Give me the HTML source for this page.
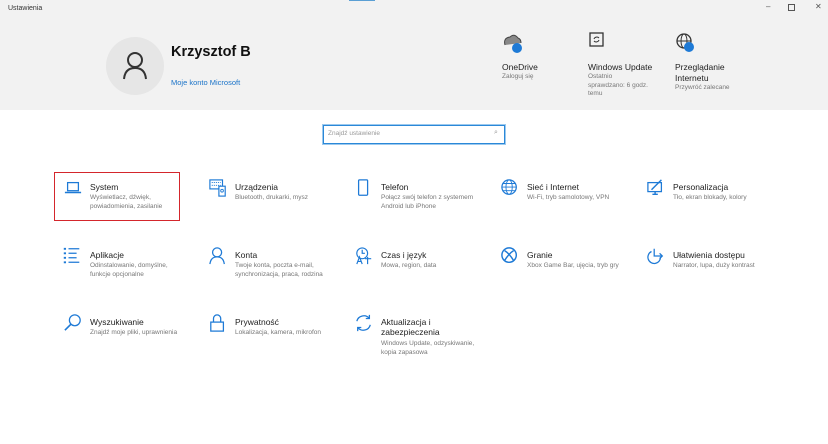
<!DOCTYPE html><html><head><meta charset="utf-8"><style>
body{margin:0;width:828px;height:444px;background:#fff;font-family:"Liberation Sans",sans-serif;position:relative;overflow:hidden}
.hdr{position:absolute;left:0;top:0;width:828px;height:110px;background:#f2f2f2}
.a{position:absolute}
.t{font-size:8.5px;color:#222;white-space:nowrap}
.s{font-size:6.5px;color:#777;line-height:8.5px}
.item .t{position:absolute;top:0}
.item .s{position:absolute;top:12px;width:120px}
.ic{position:absolute;left:-26px;top:-3px;width:18px;height:18px}
svg{overflow:visible}
</style></head><body>
<div class="hdr"></div>
<div class="a" style="left:8px;top:5px;font-size:7px;color:#333">Ustawienia</div>
<div class="a" style="left:349px;top:0;width:26px;height:1px;background:#5a9fd4"></div>
<div class="a" style="left:766px;top:2px;font-size:8px;color:#555">–</div>
<div class="a" style="left:788px;top:4px;width:5px;height:5px;border:1px solid #555"></div>
<div class="a" style="left:815px;top:2px;font-size:8px;color:#555">✕</div>
<div class="a" style="left:106px;top:37px;width:58px;height:58px;border-radius:50%;background:#e6e6e6"></div>
<svg class="a" style="left:122px;top:51px" width="26" height="30"><circle cx="13" cy="9" r="7" fill="none" stroke="#333" stroke-width="2"/><path d="M2 28 Q3 17 13 17 Q23 17 24 28" fill="none" stroke="#333" stroke-width="2"/></svg>
<div class="a" style="left:171px;top:44px;font-size:14.5px;font-weight:bold;color:#111">Krzysztof B</div>
<div class="a" style="left:171px;top:78px;font-size:7.5px;color:#1a73c8">Moje konto Microsoft</div>
<svg class="a" style="left:503px;top:33px" width="22" height="20"><path d="M2 12 Q0 5 7 4 Q11 0 15 5 Q18 6 18 10" fill="#888" stroke="#444" stroke-width="1"/><circle cx="14" cy="15" r="5" fill="#1e7ad6"/></svg>
<div class="a t" style="left:502px;top:62px">OneDrive</div>
<div class="a s" style="left:502px;top:73px">Zaloguj się</div>
<svg class="a" style="left:589px;top:32px" width="16" height="16"><rect x="1" y="1" width="13" height="13" fill="none" stroke="#333" stroke-width="1.3"/><path d="M5 7 A3 3 0 0 1 10 6 M10 8 A3 3 0 0 1 5 9" fill="none" stroke="#333"/></svg>
<div class="a t" style="left:588px;top:62px">Windows Update</div>
<div class="a s" style="left:588px;top:73px;width:60px">Ostatnio sprawdzano: 6 godz. temu</div>
<svg class="a" style="left:675px;top:32px" width="22" height="22"><circle cx="9" cy="9" r="7" fill="none" stroke="#333" stroke-width="1.3"/><ellipse cx="9" cy="9" rx="3" ry="7" fill="none" stroke="#333"/><path d="M2 9H16" stroke="#333"/><circle cx="14" cy="15" r="5" fill="#1e7ad6"/></svg>
<div class="a t" style="left:675px;top:62px;line-height:11px">Przeglądanie<br>Internetu</div>
<div class="a s" style="left:675px;top:84px">Przywróć zalecane</div>
<div class="a" style="left:323px;top:125px;width:180px;height:17px;border:1px solid #2b88d8;box-shadow:0 0 0 1px #9cc9ee"></div>
<div class="a" style="left:328px;top:130px;font-size:6.5px;color:#999">Znajdź ustawienie</div>
<div class="a" style="left:494px;top:129px;font-size:7px;color:#999">⌕</div>
<div class="a" style="left:54px;top:172px;width:124px;height:47px;border:1.5px solid #d4262c"></div>

<div class="a item" style="left:90px;top:182px"><svg class="ic" viewBox="0 0 20 20"><rect x="4" y="4" width="12" height="9" fill="none" stroke="#1e7ad6" stroke-width="1.4"/><path d="M1 15H19" stroke="#1e7ad6" stroke-width="1.6"/></svg><div class="t">System</div><div class="s" style="width:80px">Wyświetlacz, dźwięk, powiadomienia, zasilanie</div></div>
<div class="a item" style="left:235px;top:182px"><svg class="ic" viewBox="0 0 20 20"><rect x="1" y="1" width="14" height="10" fill="none" stroke="#1e7ad6" stroke-width="1.3"/><path d="M3 4h10M3 7h10" stroke="#1e7ad6" stroke-dasharray="1.3 1"/><rect x="11" y="8" width="7" height="11" fill="#fff" stroke="#1e7ad6" stroke-width="1.3"/><circle cx="14.5" cy="13" r="1.5" fill="none" stroke="#1e7ad6"/></svg><div class="t">Urządzenia</div><div class="s">Bluetooth, drukarki, mysz</div></div>
<div class="a item" style="left:381px;top:182px"><svg class="ic" viewBox="0 0 20 20"><rect x="4" y="1" width="10" height="17" rx="1" fill="none" stroke="#1e7ad6" stroke-width="1.4"/></svg><div class="t">Telefon</div><div class="s" style="width:108px">Połącz swój telefon z systemem Android lub iPhone</div></div>
<div class="a item" style="left:527px;top:182px"><svg class="ic" viewBox="0 0 20 20"><circle cx="9" cy="9" r="8" fill="none" stroke="#1e7ad6" stroke-width="1.4"/><ellipse cx="9" cy="9" rx="3.5" ry="8" fill="none" stroke="#1e7ad6"/><path d="M1 9H17M2 5H16M2 13H16" stroke="#1e7ad6"/></svg><div class="t">Sieć i Internet</div><div class="s">Wi-Fi, tryb samolotowy, VPN</div></div>
<div class="a item" style="left:673px;top:182px"><svg class="ic" viewBox="0 0 20 20"><rect x="1" y="4" width="15" height="10" fill="none" stroke="#1e7ad6" stroke-width="1.4"/><path d="M6 17H12M9 14V17M5 12L16 1" stroke="#1e7ad6" stroke-width="1.6"/></svg><div class="t">Personalizacja</div><div class="s">Tło, ekran blokady, kolory</div></div>

<div class="a item" style="left:90px;top:250px"><svg class="ic" viewBox="0 0 20 20"><path d="M1 1v2M1 6v2M1 11v2M1 16v2" stroke="#1e7ad6" stroke-width="2.5"/><path d="M5 2H17M5 7H14M5 12H14M5 17H17" stroke="#1e7ad6" stroke-width="1.4"/></svg><div class="t">Aplikacje</div><div class="s" style="width:85px">Odinstalowanie, domyślne, funkcje opcjonalne</div></div>
<div class="a item" style="left:235px;top:250px"><svg class="ic" viewBox="0 0 20 20"><circle cx="9" cy="6" r="5" fill="none" stroke="#1e7ad6" stroke-width="1.4"/><path d="M1 19Q2 11 9 11Q16 11 17 19" fill="none" stroke="#1e7ad6" stroke-width="1.4"/></svg><div class="t">Konta</div><div class="s">Twoje konta, poczta e-mail, synchronizacja, praca, rodzina</div></div>
<div class="a item" style="left:381px;top:250px"><svg class="ic" viewBox="0 0 20 20"><circle cx="8" cy="7" r="6" fill="none" stroke="#1e7ad6" stroke-width="1.3"/><path d="M8 3V7H11M2 19L5 11L8 19M3 16H7M11 13H18M14 11V19" fill="none" stroke="#1e7ad6" stroke-width="1.3"/></svg><div class="t">Czas i język</div><div class="s">Mowa, region, data</div></div>
<div class="a item" style="left:527px;top:250px"><svg class="ic" viewBox="0 0 20 20"><circle cx="9" cy="9" r="8" fill="none" stroke="#1e7ad6" stroke-width="1.6"/><path d="M4 4Q9 7 14 15M14 4Q9 7 4 15" fill="none" stroke="#1e7ad6" stroke-width="1.6"/></svg><div class="t">Granie</div><div class="s">Xbox Game Bar, ujęcia, tryb gry</div></div>
<div class="a item" style="left:673px;top:250px"><svg class="ic" viewBox="0 0 20 20"><path d="M5 5A7 7 0 1 0 15 11" fill="none" stroke="#1e7ad6" stroke-width="1.4"/><path d="M8 2V10H17M14 7L17 10L14 13" fill="none" stroke="#1e7ad6" stroke-width="1.4"/></svg><div class="t">Ułatwienia dostępu</div><div class="s">Narrator, lupa, duży kontrast</div></div>

<div class="a item" style="left:90px;top:317px"><svg class="ic" viewBox="0 0 20 20"><circle cx="12" cy="7" r="6" fill="none" stroke="#1e7ad6" stroke-width="1.4"/><path d="M8 11L1 18" stroke="#1e7ad6" stroke-width="1.8"/></svg><div class="t">Wyszukiwanie</div><div class="s">Znajdź moje pliki, uprawnienia</div></div>
<div class="a item" style="left:235px;top:317px"><svg class="ic" viewBox="0 0 20 20"><path d="M5 9V5A4 4 0 0 1 13 5V9" fill="none" stroke="#1e7ad6" stroke-width="1.4"/><rect x="2" y="9" width="14" height="10" fill="none" stroke="#1e7ad6" stroke-width="1.4"/></svg><div class="t">Prywatność</div><div class="s">Lokalizacja, kamera, mikrofon</div></div>
<div class="a item" style="left:381px;top:317px"><svg class="ic" viewBox="0 0 20 20"><path d="M2 8A8 8 0 0 1 16 5M17 12A8 8 0 0 1 3 15" fill="none" stroke="#1e7ad6" stroke-width="1.4"/><path d="M16 1V5H12M3 19V15H7" fill="none" stroke="#1e7ad6" stroke-width="1.4"/></svg><div class="t" style="line-height:10px">Aktualizacja i<br>zabezpieczenia</div><div class="s" style="top:23px;width:100px">Windows Update, odzyskiwanie, kopia zapasowa</div></div>
</body></html>
